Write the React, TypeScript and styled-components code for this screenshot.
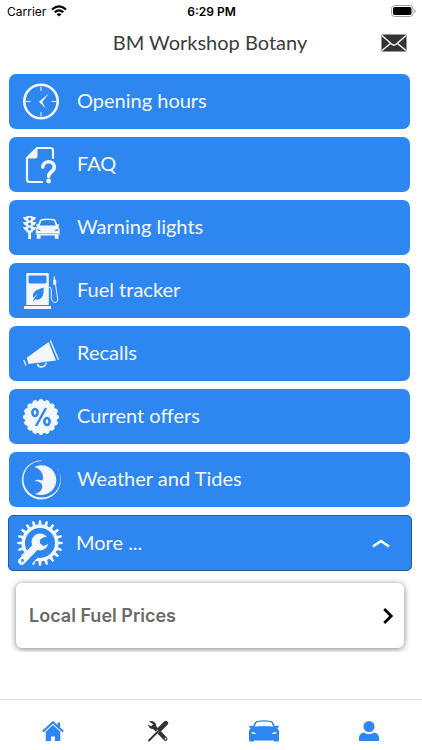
import React, { useState } from "react";
import styled, { createGlobalStyle, css } from "styled-components";

const BLUE = "#2e87f0";
const PALE = "#f3f7fd";

const GlobalStyle = createGlobalStyle`
  *, *::before, *::after { box-sizing: border-box; }
  body { margin: 0; background: #fff; }
  button { font: inherit; color: inherit; border: 0; background: none; padding: 0; cursor: pointer; }
  svg { display: block; flex: none; }
`;

const Page = styled.div`
  display: flex;
  flex-direction: column;
  min-height: 100vh;
  background: #fff;
  font-family: Lato, "Liberation Sans", sans-serif;
`;

const StatusBar = styled.div`
  display: grid;
  grid-template-columns: 1fr auto 1fr;
  align-items: center;
  height: 22px;
  padding: 0 6px 0 7px;
  font-family: Inter, "Liberation Sans", sans-serif;
  font-size: 12px;
  color: #000;
`;

const Carrier = styled.span`
  display: flex;
  align-items: center;
  gap: 5px;
`;

const Time = styled.time`
  font-weight: 600;
`;

const Battery = styled.span`
  justify-self: end;
`;

const Header = styled.header`
  display: grid;
  grid-template-columns: 50px 1fr 48px;
  align-items: center;
  height: 42px;
  padding-right: 4px;
`;

const Title = styled.h1`
  grid-column: 2;
  margin: 0;
  padding-bottom: 2px;
  text-align: center;
  font-size: 20px;
  line-height: 24px;
  font-weight: 400;
  color: #3c3c3c;
`;

const MailButton = styled.button`
  justify-self: center;
`;

const Main = styled.main`
  flex: 1;
  padding: 10px 10px 0 8px;
`;

const Menu = styled.nav`
  display: flex;
  flex-direction: column;
  gap: 8px;
`;

const MenuButton = styled.button<{ $outlined?: boolean }>`
  display: flex;
  align-items: center;
  gap: 12px;
  height: 55px;
  margin: 0 2px 0 1px;
  padding: 0 22px 0 8px;
  border-radius: 7px;
  background: ${BLUE};
  color: ${PALE};
  font-size: 20px;
  line-height: 24px;
  text-align: left;
  ${(p) =>
    p.$outlined &&
    css`
      height: 56px;
      margin: 0;
      padding: 0 21px 0 7px;
      border: 1px solid #2a5796;
      border-radius: 5px;
    `}
`;

const MenuLabel = styled.span`
  flex: 1;
  padding-bottom: 3px;
`;

const Submenu = styled.div`
  overflow: hidden;
  padding: 12px 8px 4px;
`;

const Card = styled.a`
  display: flex;
  align-items: center;
  justify-content: space-between;
  height: 65px;
  padding: 0 11px 0 13px;
  border-radius: 6px;
  background: #fff;
  box-shadow: 0 1px 6px rgba(0, 0, 0, 0.5);
  font-family: Inter, "Liberation Sans", sans-serif;
  font-size: 18px;
  font-weight: 600;
  color: #6a6a6a;
  text-decoration: none;
`;

const TabBar = styled.nav`
  display: grid;
  grid-template-columns: repeat(4, 1fr);
  height: 51px;
  border-top: 1px solid #dedede;
`;

const Tab = styled.button`
  display: flex;
  align-items: center;
  justify-content: center;
  padding-top: 12px;
`;

function toothed(cx: number, cy: number, outer: number, inner: number, teeth: number, tip: number, root: number) {
  const step = (Math.PI * 2) / teeth;
  const points: string[] = [];
  for (let i = 0; i < teeth; i++) {
    const mid = i * step - Math.PI / 2;
    const corners = [
      [inner, -root],
      [outer, -tip],
      [outer, tip],
      [inner, root],
    ];
    for (const [r, k] of corners) {
      const a = mid + k * step;
      points.push(`${(cx + r * Math.cos(a)).toFixed(2)} ${(cy + r * Math.sin(a)).toFixed(2)}`);
    }
  }
  return `M${points.join("L")}Z`;
}

const RowIcon = ({ children }: { children: React.ReactNode }) => (
  <svg width="48" height="48" viewBox="0 0 48 48" fill={PALE} aria-hidden="true">
    {children}
  </svg>
);

const ClockIcon = () => (
  <RowIcon>
    <circle cx="24" cy="23.500" r="16.700" fill="none" stroke={PALE} strokeWidth="2.600" />
    <path d="M24 8.500v4.500M24 34v4.500M9 23.500h4.500M34.500 23.500h4.500" stroke={PALE} strokeWidth="1" />
    <path d="M22 23.700L32 15.300L25.200 23.900L28.800 30.500Z" />
  </RowIcon>
);

const FaqIcon = () => (
  <RowIcon>
    <path
      d="M25 41H12.500Q10 41 10 38.500V17L20 7H33.500Q36 7 36 9.500V17"
      fill="none"
      stroke={PALE}
      strokeWidth="2.200"
      strokeLinecap="round"
    />
    <path d="M9.500 17.500L20.500 6.500V15Q20.500 17.500 18 17.500Z" />
    <path
      d="M25.800 26C26 19 37.500 19 37.300 26C37.300 31 31.600 30.500 31.600 35.500"
      fill="none"
      stroke={PALE}
      strokeWidth="3.600"
      strokeLinecap="round"
    />
    <circle cx="31.600" cy="40" r="2.400" />
  </RowIcon>
);

const WarningIcon = () => (
  <RowIcon>
    <path d="M9.500 12h6.200V28.500h-1.700V35h-2.800v-6.500H9.500Z" />
    <path d="M6 13h4v4Q7 16.500 6 13ZM6 18h4v4Q7 21.500 6 18ZM6 23h4v4Q7 26.500 6 23ZM19.200 13h-4v4Q18.200 16.500 19.200 13ZM19.200 18h-4v4Q18.200 21.500 19.200 18ZM19.200 23h-4v4Q18.200 26.500 19.200 23Z" />
    <g fill={BLUE}>
      <circle cx="12.600" cy="15" r="1.600" />
      <circle cx="12.600" cy="20" r="1.600" />
      <circle cx="12.600" cy="25" r="1.600" />
    </g>
    <path
      fillRule="evenodd"
      d="M24.500 15Q30.700 14 37 15Q38.200 15.300 38.700 16.500L40.300 20.500L42 20.200Q42.800 21.500 41.300 22.300Q42.600 24 42.600 26V30.500H41.500V34.800H37.800V31.500H23.500V34.800H19.800V30.500H18.800V26Q18.800 24 20.200 22.300Q18.600 21.500 19.400 20.200L21.100 20.500L22.700 16.500Q23.200 15.300 24.500 15ZM24.500 16.500L22.700 21.500H38.700L37 16.500Q30.700 15.300 24.500 16.500ZM20.500 25L20.800 26.800L23.800 27.200Q23.300 25.400 20.500 25ZM41 25Q38 25.400 37.600 27.200L40.700 26.800Z"
    />
    <path d="M19.500 29.700h22.500" stroke={BLUE} strokeWidth=".5" />
  </RowIcon>
);

const FuelIcon = () => (
  <RowIcon>
    <path
      fillRule="evenodd"
      d="M10.500 6h20.300q1 0 1 1v31H9.300V7q0-1 1.200-1ZM12.500 8.500q-1 0-1 1V15q0 1.500 1.500 1.500h15q1.500 0 1.500-1.500V9.500q0-1-1-1Z"
    />
    <path d="M7 39h27v3H7Z" />
    <path d="M15.500 35Q17 31 21 26.500Q18.500 28.500 16.500 31C14.500 26 18 23 26.700 20.500C27 29 25 33.500 18.200 32.500Z" fill={BLUE} />
    <path d="M32 20.200Q34 20 34.300 22.500V30.500C34.500 37 41.500 37 40.600 31.500C40 27 39.300 24 38.500 17" fill="none" stroke={PALE} strokeWidth="1" />
    <path d="M36.700 9.500h1.200V12l1.300 1.300v4.500h-3v-4.500l.5-1.300Z" />
  </RowIcon>
);

const MegaphoneIcon = () => (
  <RowIcon>
    <path d="M9.700 27.700L31.700 12L39 30.600L11.500 34Z" />
    <path d="M33.300 10.500L41.400 29.700" stroke={PALE} strokeWidth="1.300" />
    <path d="M6.800 30L9 35.500" stroke={PALE} strokeWidth="1.300" />
    <path d="M20.500 34C21.500 38.500 29 37.500 29 32.800" fill="none" stroke={PALE} strokeWidth="1.500" />
  </RowIcon>
);

const OffersIcon = () => (
  <RowIcon>
    <path d={toothed(24, 24, 17.600, 15.900, 16, 0.16, 0.42)} stroke={PALE} strokeWidth=".8" strokeLinejoin="round" />
    <g fill="none" stroke={BLUE} strokeWidth="2.600">
      <ellipse cx="18" cy="19.500" rx="2.600" ry="3.500" />
      <ellipse cx="30" cy="28.500" rx="2.600" ry="3.500" />
      <path d="M29 15L19 33" strokeWidth="2.400" />
    </g>
  </RowIcon>
);

const WeatherIcon = () => (
  <RowIcon>
    <path
      fillRule="evenodd"
      d="M24.500 4.500A19.500 19.500 0 1 0 43.800 24A19.500 19.500 0 0 0 39.500 11.500A18.500 18.500 0 0 1 24.800 41.500A17.700 17.700 0 0 1 24.500 5Z"
    />
    <path d="M17.500 11C28 5.500 39.300 13 39.300 24C39.300 35 28 42 17.800 37.800C22.500 36.800 25.300 34 25.300 30.500C25.300 27 22 25 17.500 25.300C19.500 23.800 22 23.300 24 24.300Q25.500 24.800 25.800 23.500C26.800 18.500 24 13 17.500 11Z" />
  </RowIcon>
);

const GearIcon = () => (
  <RowIcon>
    <path d={toothed(24, 24, 22.800, 17.800, 20, 0.15, 0.29)} />
    <circle cx="24" cy="24" r="18.500" />
    <circle cx="24" cy="24" r="15" fill={BLUE} />
    <path d="M20 24L0 42L2 50L12 49L27 33Z" fill={BLUE} />
    <path d="M16.500 26L2.500 40.500Q1 43 3.500 45Q6 47 8 45L21.500 31Z" />
    <circle cx="24" cy="23" r="8.500" />
    <path d="M35 17.500L27.500 18.300L24 20.800V24.500L27.500 27L35 24Z" fill={BLUE} />
    <circle cx="6.500" cy="41.500" r="1.400" fill={BLUE} />
  </RowIcon>
);

const WifiIcon = () => (
  <svg width="16" height="12" viewBox="0 0 16 12" fill="none" stroke="#000" strokeWidth="2.200" aria-label="Wi-Fi">
    <path d="M1 4.500Q8-1.800 15 4.500M3.700 7.300Q8 3.400 12.300 7.300" />
    <path d="M8 11.600L5.500 9.200Q8 7.200 10.500 9.200Z" fill="#000" stroke="none" />
  </svg>
);

const BatteryIcon = () => (
  <svg width="25" height="12" viewBox="0 0 25 12" aria-label="Battery full">
    <rect x=".5" y=".5" width="21.500" height="11" rx="3.200" fill="none" stroke="#a0a0a0" />
    <rect x="2" y="2" width="18.500" height="8" rx="1.800" />
    <path d="M23.300 4Q24.700 4.500 24.700 6T23.300 8Z" fill="#a0a0a0" />
  </svg>
);

const MailIcon = () => (
  <svg width="26" height="18" viewBox="0 0 26 18" aria-hidden="true">
    <rect x=".5" y=".5" width="25" height="17" rx="1" fill="#333" />
    <path d="M1 1.500L10.500 10Q13 12 15.500 10L25 1.500M1 16.500L9.500 9.500M25 16.500L16.500 9.500" fill="none" stroke="#fff" strokeWidth="1.400" />
  </svg>
);

const HomeIcon = () => (
  <svg width="22" height="22" viewBox="0 0 22 22" fill={BLUE} aria-hidden="true">
    <path d="M1.500 11L11 2.200L20.500 11" fill="none" stroke={BLUE} strokeWidth="2.200" strokeLinecap="round" strokeLinejoin="round" />
    <path d="M15.500 2.500H18V8L15.500 5.800ZM11 5L18.300 11.800V20.300Q18.300 21 17.500 21H13V16.500H9V21H4.500Q3.700 21 3.700 20.300V11.800Z" />
  </svg>
);

const ToolsIcon = () => (
  <svg width="22" height="22" viewBox="0 0 22 22" aria-hidden="true">
    <path d="M7.500 7.500L18.500 18.800" stroke="#333" strokeWidth="4" strokeLinecap="round" />
    <path d="M2 1.500C5-.2 10.500 2.500 9 8C5.500 10.500 1.500 8.500 1.200 4.500L4 6.200L6.300 4.200Z" fill="#333" />
    <circle cx="18.500" cy="18.700" r=".9" fill="#fff" />
    <path d="M4 18.500L12.500 9.500" stroke="#fff" strokeWidth="2.600" />
    <path d="M1.500 21L13 9.500" stroke="#333" strokeWidth="1.800" />
    <path d="M13 9L18.800 3.200" stroke="#333" strokeWidth="4.600" strokeLinecap="round" />
  </svg>
);

const CarIcon = () => (
  <svg width="32" height="22" viewBox="0 0 32 22" fill={BLUE} aria-hidden="true">
    <path
      fillRule="evenodd"
      d="M9 .9Q16-.3 23 .9Q24.500 1.200 25.200 2.500L27 6L30.500 5.800Q31.800 6.800 30 7.700L29.300 8Q31 9.500 31 12V20.500Q31 21.500 30 21.500H26.500L25.500 20.500H6.500L5.500 21.500H2Q1 21.500 1 20.500V12Q1 9.500 2.700 8L2 7.700Q.2 6.800 1.500 5.800L5 6L6.800 2.500Q7.500 1.200 9 .9ZM9 2.200L6.500 6.600Q16 5.400 25.500 6.600L23 2.200Q16 1 9 2.200ZM3.300 12L4 13.800L8.300 14Q7.500 12.200 3.300 12ZM28.700 12Q24.500 12.200 23.700 14L28 13.800Z"
    />
  </svg>
);

const UserIcon = () => (
  <svg width="20" height="22" viewBox="0 0 20 22" fill={BLUE} aria-hidden="true">
    <circle cx="10" cy="6.500" r="5.500" />
    <path d="M0 21V18Q0 13.500 4.500 12.500Q10 15.500 15.500 12.500Q20 13.500 20 18V21Z" />
  </svg>
);

const items = [
  { label: "Opening hours", Icon: ClockIcon },
  { label: "FAQ", Icon: FaqIcon },
  { label: "Warning lights", Icon: WarningIcon },
  { label: "Fuel tracker", Icon: FuelIcon },
  { label: "Recalls", Icon: MegaphoneIcon },
  { label: "Current offers", Icon: OffersIcon },
  { label: "Weather and Tides", Icon: WeatherIcon },
];

const tabs = [
  { name: "Home", Icon: HomeIcon },
  { name: "Service", Icon: ToolsIcon },
  { name: "Vehicle", Icon: CarIcon },
  { name: "Profile", Icon: UserIcon },
];

export default function App() {
  const [open, setOpen] = useState(true);

  return (
    <Page>
      <GlobalStyle />
      <StatusBar>
        <Carrier>
          Carrier
          <WifiIcon />
        </Carrier>
        <Time>6:29 PM</Time>
        <Battery>
          <BatteryIcon />
        </Battery>
      </StatusBar>
      <Header>
        <Title>BM Workshop Botany</Title>
        <MailButton aria-label="Messages">
          <MailIcon />
        </MailButton>
      </Header>
      <Main>
        <Menu>
          {items.map(({ label, Icon }) => (
            <MenuButton key={label}>
              <Icon />
              <MenuLabel>{label}</MenuLabel>
            </MenuButton>
          ))}
          <MenuButton $outlined aria-expanded={open} onClick={() => setOpen(!open)}>
            <GearIcon />
            <MenuLabel>More ...</MenuLabel>
            <svg width="18" height="10" viewBox="0 0 18 10" fill="none" stroke="#fff" strokeWidth="2.600" aria-hidden="true">
              <path d={open ? "M1 8.500L9 3L17 8.500" : "M1 1.500L9 7L17 1.500"} />
            </svg>
          </MenuButton>
        </Menu>
        {open && (
          <Submenu>
            <Card href="#fuel-prices">
              Local Fuel Prices
              <svg width="10" height="16" viewBox="0 0 10 16" fill="none" stroke="#000" strokeWidth="2.800" aria-hidden="true">
                <path d="M1.200 1L8.200 8L1.200 15" />
              </svg>
            </Card>
          </Submenu>
        )}
      </Main>
      <TabBar>
        {tabs.map(({ name, Icon }) => (
          <Tab key={name} aria-label={name}>
            <Icon />
          </Tab>
        ))}
      </TabBar>
    </Page>
  );
}
